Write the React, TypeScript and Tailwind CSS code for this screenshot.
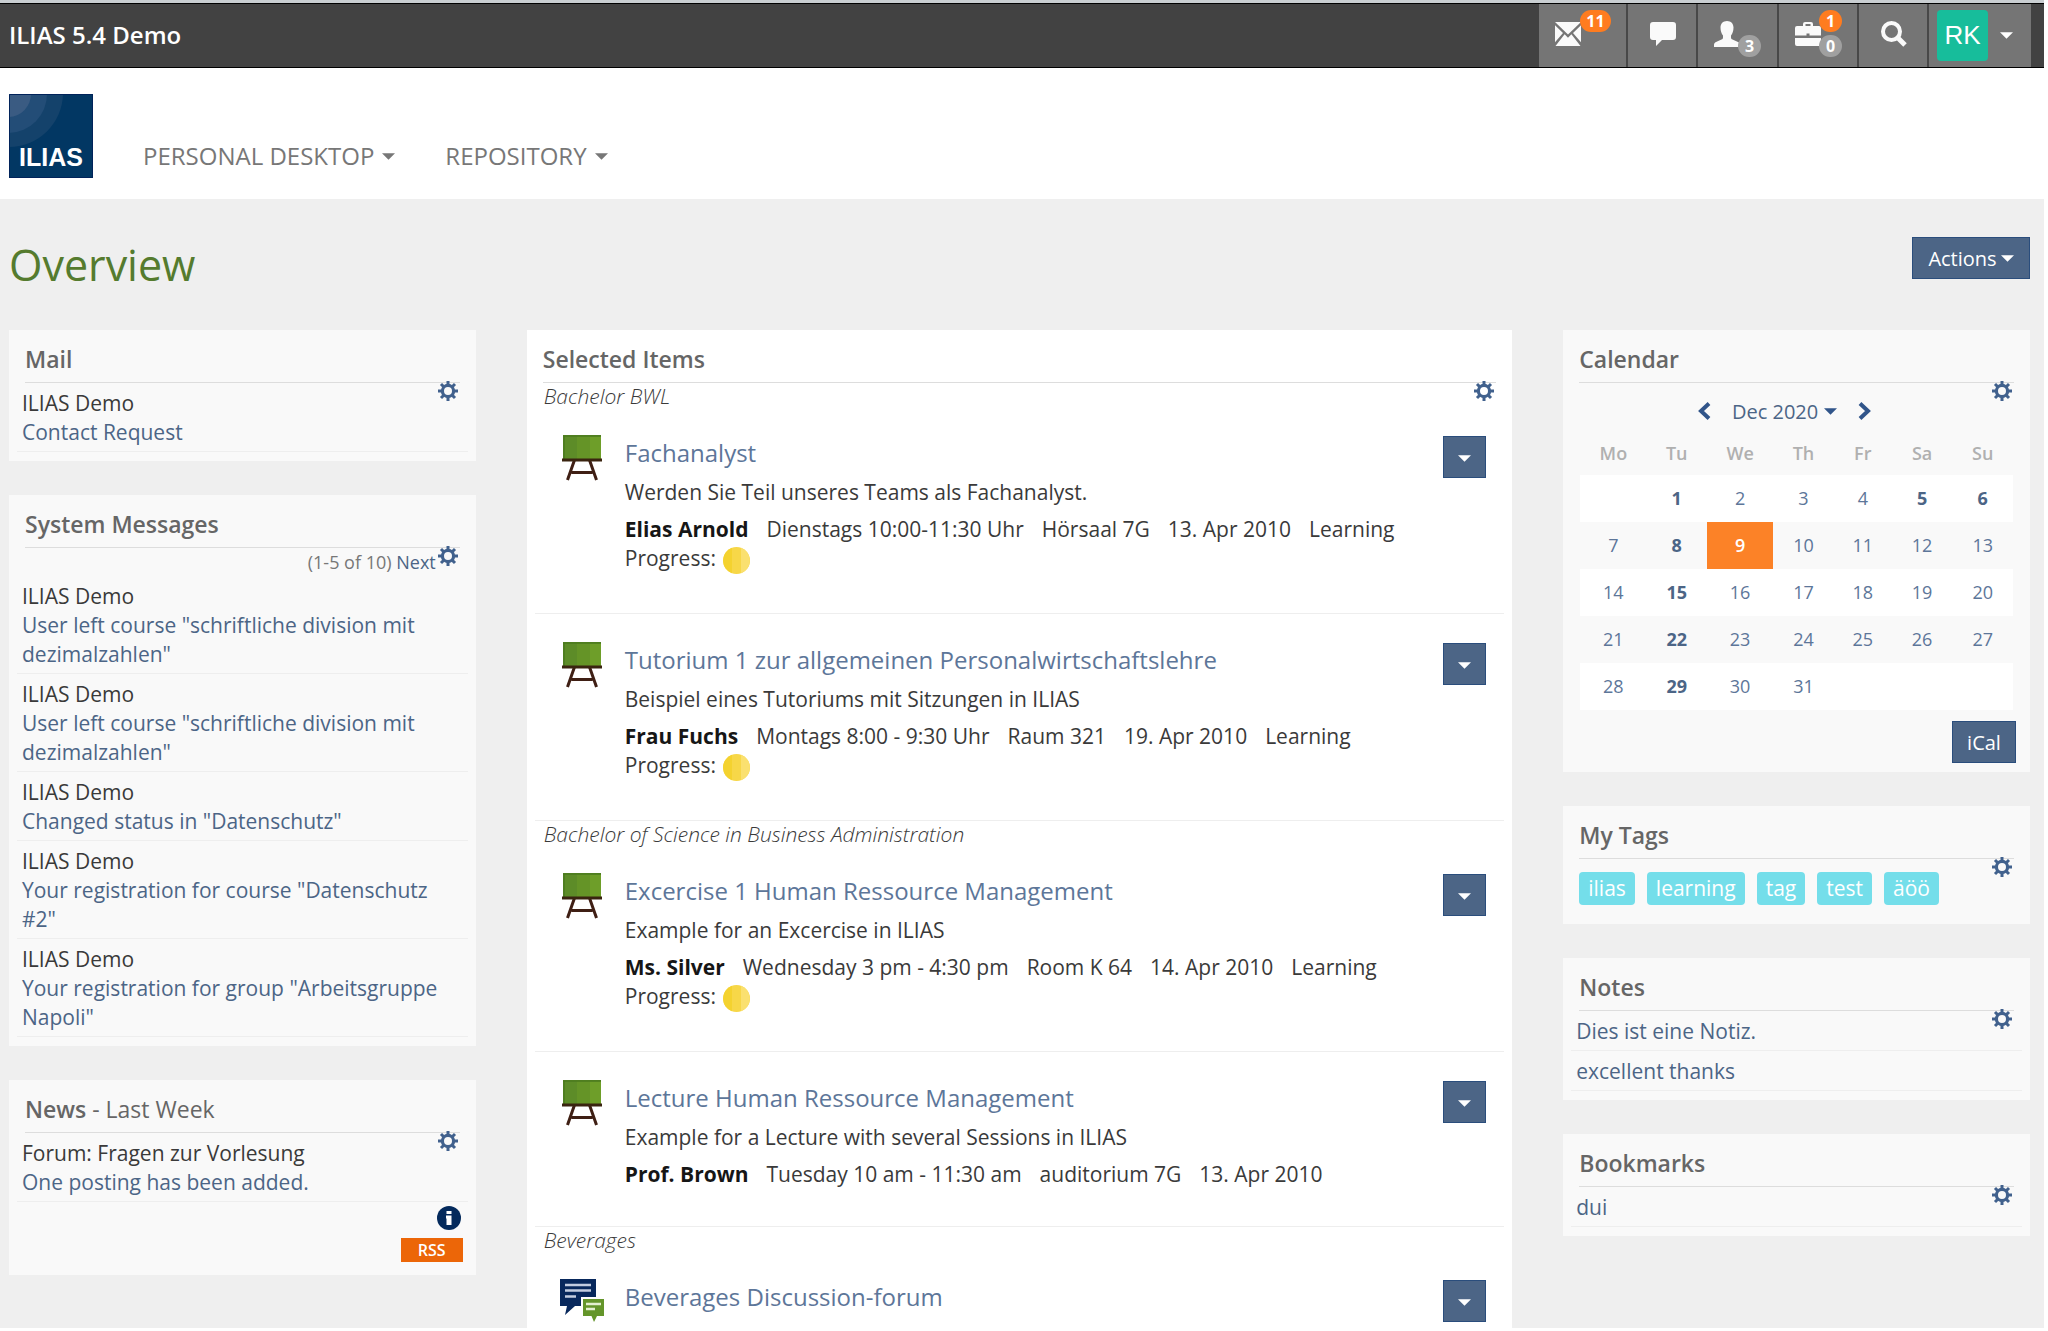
import React from "react";

type IconProps = { className?: string };

const Caret = ({ className = "" }: IconProps) => (
  <svg viewBox="0 0 14 7" className={`inline-block w-[13px] h-[7px] shrink-0 ${className}`} aria-hidden="true">
    <path d="M0 0h14L7 7z" fill="currentColor" />
  </svg>
);

const Gear = ({ className = "" }: IconProps) => (
  <svg viewBox="0 0 20 20" className={className} aria-hidden="true">
    <g stroke="currentColor" strokeWidth="3">
      <path d="M10 0v4M10 16v4M0 10h4M16 10h4M3 3l3 3M14 14l3 3M3 17l3-3M14 6l3-3" />
      <circle cx="10" cy="10" r="5.6" fill="none" strokeWidth="3.2" />
    </g>
  </svg>
);

const Envelope = () => (
  <svg viewBox="0 0 26 24" className="w-[26px] h-6" fill="#fafafa" aria-hidden="true">
    <path d="M0 0h26L13 12.500z" />
    <path d="M0 3.200v17L8 11zM26 3.200v17L18 11z" />
    <path d="M9.600 12.300L13 15.800l3.400-3.500L25.500 24H.5z" />
  </svg>
);

const Bubble = () => (
  <svg viewBox="0 0 26 24" className="w-[26px] h-6" fill="#fafafa" aria-hidden="true">
    <path d="M3 0h20a3 3 0 0 1 3 3v12a3 3 0 0 1-3 3H12l-6 6v-6H3a3 3 0 0 1-3-3V3a3 3 0 0 1 3-3z" />
  </svg>
);

const Person = () => (
  <svg viewBox="0 0 26 26" className="w-[26px] h-[26px]" fill="#fafafa" aria-hidden="true">
    <path d="M13 0c4 0 6.500 2.800 6.500 6.500 0 3.500-1 6-2.500 8v2c0 1 .5 1.600 1.500 2l5.500 2.500c1.300.6 2 1.500 2 3V26H0v-2c0-1.500.7-2.400 2-3l5.500-2.500c1-.4 1.500-1 1.500-2v-2c-1.500-2-2.500-4.500-2.500-8C6.500 2.800 9 0 13 0z" />
  </svg>
);

const Briefcase = () => (
  <svg viewBox="0 0 26 24" className="w-[26px] h-6" fill="#fafafa" aria-hidden="true">
    <path d="M8 4V2a2 2 0 0 1 2-2h6a2 2 0 0 1 2 2v2h6a2 2 0 0 1 2 2v7.500H14.500v-2h-3v2H0V6a2 2 0 0 1 2-2zM10.500 4h5V2h-5z" />
    <path d="M0 16h26v6a2 2 0 0 1-2 2H2a2 2 0 0 1-2-2z" />
  </svg>
);

const Magnifier = () => (
  <svg viewBox="0 0 26 26" className="w-[26px] h-[26px]" fill="none" stroke="#fafafa" aria-hidden="true">
    <circle cx="10.500" cy="10.500" r="8.500" strokeWidth="4" />
    <path d="M17 17l7 7" strokeWidth="5" />
  </svg>
);

const Board = () => (
  <svg viewBox="0 0 40 46" className="w-10 h-[46px]" aria-hidden="true">
    <path d="M12.500 25L5.500 45M27.500 25L34.500 45M9.500 37.500h21" stroke="#3f1f14" strokeWidth="3" fill="none" />
    <path d="M1 0h38v24H1z" fill="#5d8c28" />
    <path d="M15 1h24v23H15z" fill="#659427" />
    <path d="M28 1h11v23H28z" fill="#6e9e29" />
    <path d="M1 1h38M2 1v23" stroke="#4b7a1e" strokeWidth="1.500" />
    <path d="M0 23.500h40v3H0z" fill="#3a2410" />
  </svg>
);

const Forum = () => (
  <svg viewBox="0 0 44 43" className="w-11 h-[43px]" aria-hidden="true">
    <path d="M0 0h36v27H15L5 36l2-9H0z" fill="#08285c" />
    <path d="M5 6h26M5 11.500h26M5 17.500h11" stroke="#c3cde0" strokeWidth="2.500" />
    <path d="M22 19h22v18h-7l-3 6-3.500-6H22z" fill="#fff" stroke="#fff" strokeWidth="2" />
    <path d="M23 20h21v17h-7l-3 6-2.500-6H23z" fill="#64952a" />
    <path d="M26 25h15M26 30h9" stroke="#e3efcf" strokeWidth="2.500" />
  </svg>
);

const HalfDone = () => (
  <svg viewBox="0 0 27 27" className="inline-block w-[27px] h-[27px] ml-[2px] align-[-8px]" role="img" aria-label="In progress">
    <circle cx="13.500" cy="13.500" r="13.500" fill="#f7d748" />
    <path d="M9 .8a13.500 13.500 0 0 0 0 25.400z" fill="#f4d22f" />
    <path d="M18 .8a13.500 13.500 0 0 1 0 25.400z" fill="#fae06f" />
  </svg>
);

const Logo = () => (
  <svg viewBox="0 0 84 84" className="w-[84px] h-[84px]" role="img" aria-label="ILIAS">
    <path d="M0 0h84v84H0z" fill="#023763" />
    <path d="M0 0h54A54 54 0 0 1 0 53z" fill="#14426b" />
    <path d="M0 0h38A39 39 0 0 1 0 39z" fill="#234d77" />
    <path d="M0 0h22A23 23 0 0 1 0 23z" fill="#3a5b82" />
    <path d="M.5.5h83v83H.5z" fill="none" stroke="#01235a" />
    <text x="42" y="72" textAnchor="middle" fontFamily="Liberation Sans, sans-serif" fontWeight="700" fontSize="25" fill="#fff">
      ILIAS
    </text>
  </svg>
);

const Badge = ({ children, className }: { children: React.ReactNode; className: string }) => (
  <span
    className={`absolute min-w-[23px] h-[22px] px-1 rounded-full text-center text-[16px] leading-[22px] font-bold text-white ${className}`}
  >
    {children}
  </span>
);

const barButton = "relative h-full bg-[#757575] border-r-2 border-[#484848] flex items-center pl-4 pb-1";

function TopBar() {
  return (
    <header className="flex items-stretch justify-between h-[68px] mr-1 shrink-0 border-t-[3px] border-[#c9ced1] bg-[#424242]">
      <a href="#home" className="flex-1 flex items-center pl-[9px] pb-[2px] border-y border-black text-[24px] font-semibold text-white">
        ILIAS 5.4 Demo
      </a>
      <div className="flex border-y border-black pr-[13px]">
        <button className={`${barButton} w-[89px]`} aria-label="Mail">
          <Envelope />
          <Badge className="left-[41px] top-[6px] w-[31px] bg-[#ff7c1f]">11</Badge>
        </button>
        <button className={`${barButton} w-[70px] pl-[22px]`} aria-label="Chat">
          <Bubble />
        </button>
        <button className={`${barButton} w-[81px]`} aria-label="Who is online">
          <Person />
          <Badge className="left-10 top-[31px] bg-[#a0a0a0]">3</Badge>
        </button>
        <button className={`${barButton} w-[80px]`} aria-label="Background tasks">
          <Briefcase />
          <Badge className="left-10 top-[6px] bg-[#ff7c1f]">1</Badge>
          <Badge className="left-10 top-[31px] bg-[#a0a0a0]">0</Badge>
        </button>
        <button className={`${barButton} w-[70px] pl-[22px]`} aria-label="Search">
          <Magnifier />
        </button>
        <button className="h-full w-[102px] bg-[#757575] flex items-center gap-3 pl-2 text-white" aria-label="User menu">
          <span className="w-[51px] h-[51px] rounded-sm bg-[#17bd9b] text-center leading-[51px] text-[26px] font-['Liberation_Sans',sans-serif]">
            RK
          </span>
          <Caret />
        </button>
      </div>
    </header>
  );
}

function MainNav() {
  return (
    <nav className="flex items-end h-[131px] shrink-0 pl-[9px] pb-[21px] bg-white">
      <Logo />
      {["PERSONAL DESKTOP", "REPOSITORY"].map((label) => (
        <button key={label} className="flex items-center gap-2 ml-[50px] text-[24px] leading-[30px] text-[#777777] pb-[7px]">
          {label}
          <Caret />
        </button>
      ))}
    </nav>
  );
}

type PanelProps = { title: React.ReactNode; white?: boolean; children: React.ReactNode };

function Panel({ title, white, children }: PanelProps) {
  return (
    <section className={`relative pb-[9px] ${white ? "bg-white" : "bg-[#f9f9f9]"}`}>
      <h2 className="mx-4 h-[53px] pt-[15px] border-b border-[#dddddd] text-[23px] leading-[29px] font-semibold text-[#666666]">
        {title}
      </h2>
      <button className="absolute right-[18px] top-[51px] text-[#41618d]" aria-label="Settings">
        <Gear className="w-5 h-5" />
      </button>
      {children}
    </section>
  );
}

const row = "mx-2 px-[5px] pt-[6px] pb-1 border-b border-[#eeeeee]";
const link = "text-[#4c6586]";

const messages = [
  'User left course "schriftliche division mit dezimalzahlen"',
  'User left course "schriftliche division mit dezimalzahlen"',
  'Changed status in "Datenschutz"',
  'Your registration for course "Datenschutz #2"',
  'Your registration for group "Arbeitsgruppe Napoli"',
];

function LeftColumn() {
  return (
    <aside className="flex flex-col gap-[34px]">
      <Panel title="Mail">
        <div className={row}>
          <p>ILIAS Demo</p>
          <a href="#mail" className={link}>Contact Request</a>
        </div>
      </Panel>

      <Panel title="System Messages">
        <p className="h-7 pr-10 text-right text-[18px] leading-7 text-[#777777]">
          (1-5 of 10) <a href="#next" className={link}>Next</a>
        </p>
        {messages.map((text, idx) => (
          <div key={idx} className={row}>
            <p>ILIAS Demo</p>
            <a href="#message" className={`block pr-5 ${link}`}>{text}</a>
          </div>
        ))}
      </Panel>

      <Panel title={<>News <span className="font-normal">- Last Week</span></>}>
        <div className={row}>
          <p>Forum: Fragen zur Vorlesung</p>
          <a href="#news" className={link}>One posting has been added.</a>
        </div>
        <div className="flex flex-col items-end gap-2 pt-1 pr-[13px] pb-1">
          <svg viewBox="0 0 24 24" className="w-6 h-6 mr-[2px]" role="img" aria-label="Info">
            <circle cx="12" cy="12" r="12" fill="#042a5c" />
            <path d="M9.500 5h5v3h-5zM9 9.500h5.500V19H9.500v-6.500H9z" fill="#fff" />
          </svg>
          <a href="#rss" className="w-[62px] h-6 bg-[#ec6608] text-center text-[16px] leading-6 font-semibold text-white">
            RSS
          </a>
        </div>
      </Panel>
    </aside>
  );
}

type Item = { title: string; desc?: string; who?: string; props?: string[]; progress?: boolean; forum?: boolean };

const groups: { name: string; items: Item[] }[] = [
  {
    name: "Bachelor BWL",
    items: [
      {
        title: "Fachanalyst",
        desc: "Werden Sie Teil unseres Teams als Fachanalyst.",
        who: "Elias Arnold",
        props: ["Dienstags 10:00-11:30 Uhr", "Hörsaal 7G", "13. Apr 2010"],
        progress: true,
      },
      {
        title: "Tutorium 1 zur allgemeinen Personalwirtschaftslehre",
        desc: "Beispiel eines Tutoriums mit Sitzungen in ILIAS",
        who: "Frau Fuchs",
        props: ["Montags 8:00 - 9:30 Uhr", "Raum 321", "19. Apr 2010"],
        progress: true,
      },
    ],
  },
  {
    name: "Bachelor of Science in Business Administration",
    items: [
      {
        title: "Excercise 1 Human Ressource Management",
        desc: "Example for an Excercise in ILIAS",
        who: "Ms. Silver",
        props: ["Wednesday 3 pm - 4:30 pm", "Room K 64", "14. Apr 2010"],
        progress: true,
      },
      {
        title: "Lecture Human Ressource Management",
        desc: "Example for a Lecture with several Sessions in ILIAS",
        who: "Prof. Brown",
        props: ["Tuesday 10 am - 11:30 am", "auditorium 7G", "13. Apr 2010"],
      },
    ],
  },
  {
    name: "Beverages",
    items: [{ title: "Beverages Discussion-forum", forum: true }],
  },
];

function ListItem({ item }: { item: Item }) {
  return (
    <li className="flex mx-2 pt-7 pb-[37px] border-b border-[#eeeeee]">
      <div className="flex justify-center w-11 shrink-0 ml-[25px] mr-[21px]">{item.forum ? <Forum /> : <Board />}</div>
      <div className="flex-1">
        <h3 className="text-[24px] leading-[35px]">
          <a href="#item" className="text-[#5d7699]">{item.title}</a>
        </h3>
        <p className="mt-2 min-h-[29px]">{item.desc}</p>
        {item.who && (
          <p className="mt-2">
            <strong className="mr-[18px] font-bold text-[#161616]">{item.who}</strong>
            {item.props?.map((p) => (
              <span key={p} className="mr-[18px]">{p}</span>
            ))}
            {item.progress && (
              <>
                Learning
                <span className="block h-8">Progress: <HalfDone /></span>
              </>
            )}
          </p>
        )}
      </div>
      <button className="w-[43px] h-[42px] mt-px mr-[18px] shrink-0 bg-[#4c6586] border border-[#2a4d7c] text-white" aria-label="Actions">
        <Caret />
      </button>
    </li>
  );
}

function SelectedItems() {
  return (
    <Panel title="Selected Items" white>
      {groups.map((group) => (
        <div key={group.name}>
          <h4 className="h-6 px-[17px] text-[21px] leading-[26px] italic font-light">{group.name}</h4>
          <ul>
            {group.items.map((item) => (
              <ListItem key={item.title} item={item} />
            ))}
          </ul>
        </div>
      ))}
    </Panel>
  );
}

const weeks = [
  [0, 1, 2, 3, 4, 5, 6],
  [7, 8, 9, 10, 11, 12, 13],
  [14, 15, 16, 17, 18, 19, 20],
  [21, 22, 23, 24, 25, 26, 27],
  [28, 29, 30, 31, 0, 0, 0],
];
const busyDays = [1, 5, 6, 8, 15, 22, 29];

function dayClass(day: number) {
  if (day === 9) return "bg-[#fc8227] text-white font-semibold";
  return busyDays.includes(day) ? "font-bold text-[#4c6586]" : "text-[#5d7699]";
}

function Calendar() {
  return (
    <Panel title="Calendar">
      <div className="flex items-center justify-center gap-[21px] h-14 pr-6 text-[20px] text-[#4c6586]">
        <button aria-label="Previous month">
          <svg viewBox="0 0 14 18" className="w-[14px] h-[18px]" fill="none" stroke="#31558a" strokeWidth="4">
            <path d="M12 1.500L4 9l8 7.500" />
          </svg>
        </button>
        <button className="flex items-center gap-[6px]">
          Dec 2020
          <Caret className="text-[#31558a]" />
        </button>
        <button aria-label="Next month">
          <svg viewBox="0 0 14 18" className="w-[14px] h-[18px]" fill="none" stroke="#31558a" strokeWidth="4">
            <path d="M2 1.500L10 9l-8 7.500" />
          </svg>
        </button>
      </div>
      <div className="mx-[17px]">
        <table className="w-full table-fixed text-center text-[18px]">
          <thead>
            <tr className="text-[#b0b0b0]">
              <th className="w-[15.300%] pb-2 leading-7 font-semibold">Mo</th>
              <th className="w-[14%] pb-2 leading-7 font-semibold">Tu</th>
              <th className="w-[15.300%] pb-2 leading-7 font-semibold">We</th>
              <th className="w-[14%] pb-2 leading-7 font-semibold">Th</th>
              <th className="w-[13.400%] pb-2 leading-7 font-semibold">Fr</th>
              <th className="w-[14%] pb-2 leading-7 font-semibold">Sa</th>
              <th className="w-[14%] pb-2 leading-7 font-semibold">Su</th>
            </tr>
          </thead>
          <tbody>
            {weeks.map((week, idx) => (
              <tr key={idx} className="h-[47px] odd:bg-white">
                {week.map((day, col) => (
                  <td key={col} className={dayClass(day)}>
                    {day > 0 && <a href="#day">{day}</a>}
                  </td>
                ))}
              </tr>
            ))}
          </tbody>
        </table>
      </div>
      <div className="flex justify-end pt-[11px] pr-[14px]">
        <button className="w-16 h-[42px] bg-[#4c6586] border border-[#2a4d7c] text-[20px] text-white">iCal</button>
      </div>
    </Panel>
  );
}

function RightColumn() {
  return (
    <aside className="flex flex-col gap-[34px]">
      <Calendar />

      <Panel title="My Tags">
        <div className="flex gap-3 h-14 pt-[13px] px-4">
          {["ilias", "learning", "tag", "test", "äöö"].map((tag) => (
            <a key={tag} href="#tag" className="h-[33px] px-[9px] rounded-sm bg-[#74deea] leading-8 text-white">
              {tag}
            </a>
          ))}
        </div>
      </Panel>

      <Panel title="Notes">
        {["Dies ist eine Notiz.", "excellent thanks"].map((note) => (
          <div key={note} className={row}>
            <a href="#note" className={link}>{note}</a>
          </div>
        ))}
      </Panel>

      <Panel title="Bookmarks">
        <div className={row}>
          <a href="#bookmark" className={link}>dui</a>
        </div>
      </Panel>
    </aside>
  );
}

export default function App() {
  return (
    <div className="flex flex-col h-screen overflow-hidden bg-white pb-[3px] font-['Open_Sans',sans-serif] text-[21px] leading-[29px] text-[#3a3a3a]">
      <TopBar />
      <MainNav />
      <main className="flex-1 min-h-0 overflow-hidden mr-1 pl-[9px] pr-[14px] bg-[#efefef]">
        <div className="flex items-start justify-between h-[131px] pt-[38px]">
          <h1 className="text-[43px] leading-[56px] text-[#557b2e]">Overview</h1>
          <button className="flex items-center justify-center gap-1 w-[118px] h-[42px] bg-[#4c6586] border border-[#2a4d7c] text-[20px] text-white">
            Actions
            <Caret />
          </button>
        </div>
        <div className="grid grid-cols-[467fr_986fr_467fr] items-start gap-x-[51px]">
          <LeftColumn />
          <SelectedItems />
          <RightColumn />
        </div>
      </main>
    </div>
  );
}
